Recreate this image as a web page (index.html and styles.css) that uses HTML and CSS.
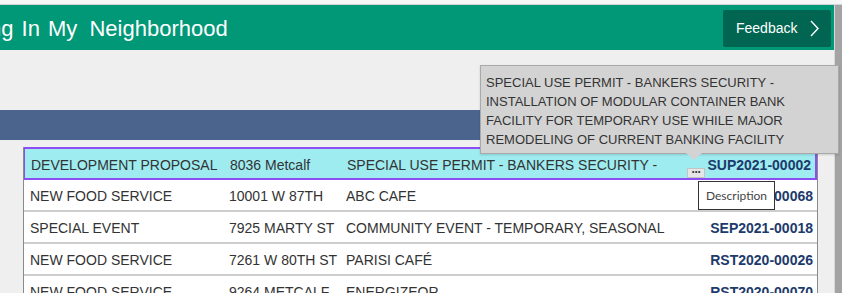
FILE: index.html
```html
<!DOCTYPE html>
<html>
<head>
<meta charset="utf-8">
<link rel="stylesheet" href="styles.css">
</head>
<body>
<div class="topstrip"></div>
<div class="frame">
  <div class="main">
    <header class="header">
      <h1 class="title">Happening In My <span class="title-last">Neighborhood</span></h1>
      <button class="feedback">Feedback
        <svg class="chev" width="9" height="17" viewBox="0 0 9 17"><path d="M1 1 L8 8.5 L1 16" fill="none" stroke="#fff" stroke-width="1.4"/></svg>
      </button>
    </header>
    <div class="spacer"></div>
    <div class="bluebar"></div>
    <div class="table">
      <div class="row selected">
        <span>DEVELOPMENT PROPOSAL</span><span>8036 Metcalf</span><span>SPECIAL USE PERMIT - BANKERS SECURITY -</span><span class="id">SUP2021-00002</span>
        <span class="more">&middot;&middot;&middot;</span>
      </div>
      <div class="row">
        <span>NEW FOOD SERVICE</span><span>10001 W 87TH</span><span>ABC CAFE</span><span class="id">RST2021-00068</span>
      </div>
      <div class="row">
        <span>SPECIAL EVENT</span><span>7925 MARTY ST</span><span>COMMUNITY EVENT - TEMPORARY, SEASONAL</span><span class="id">SEP2021-00018</span>
      </div>
      <div class="row">
        <span>NEW FOOD SERVICE</span><span>7261 W 80TH ST</span><span>PARISI CAFÉ</span><span class="id">RST2020-00026</span>
      </div>
      <div class="row">
        <span>NEW FOOD SERVICE</span><span>9264 METCALF</span><span>ENERGIZEOR</span><span class="id">RST2020-00070</span>
      </div>
    </div>
  </div>
  <div class="scrollbar"></div>
</div>
<div class="tip">SPECIAL USE PERMIT - BANKERS SECURITY -<br>INSTALLATION OF MODULAR CONTAINER BANK<br>FACILITY FOR TEMPORARY USE WHILE MAJOR<br>REMODELING OF CURRENT BANKING FACILITY</div>
<div class="tip-arrow"></div>
<div class="desc">Description</div>
</body>
</html>
```

FILE: styles.css
```css
html, body {
  margin: 0;
  padding: 0;
}
body {
  width: 842px;
  height: 293px;
  overflow: hidden;
  background: #efefef;
  font-family: "Liberation Sans", Arial, sans-serif;
  position: relative;
}
.topstrip {
  height: 4px;
  background: #f6f6f6;
  border-bottom: 1px solid #d4d4d4;
}
.frame {
  display: flex;
  height: 288px;
}
.main {
  flex: 1;
  overflow: hidden;
}
.scrollbar {
  width: 7px;
  background: #a3a3a3;
  border-left: 1px solid #d8d8d8;
}
.header {
  height: 45px;
  background: #009877;
  display: flex;
  align-items: center;
  justify-content: space-between;
  overflow: hidden;
}
.title {
  margin: 0 0 0 -93px;
  font-weight: normal;
  font-size: 22px;
  word-spacing: 2px;
  color: #fff;
  white-space: nowrap;
  line-height: 1;
  padding-top: 2px;
}
.title-last {
  margin-left: 4px;
}
.feedback {
  height: 37px;
  width: 108px;
  margin-right: 3px;
  margin-top: 1px;
  background: #006651;
  border: none;
  border-radius: 2px;
  color: #fff;
  font-family: "Liberation Sans", Arial, sans-serif;
  font-size: 14px;
  display: flex;
  align-items: center;
  padding: 0 0 0 13px;
}
.chev {
  margin-left: 13px;
}
.spacer {
  height: 60px;
}
.bluebar {
  height: 30px;
  background: #4a648d;
}
.table {
  margin: 7px 16px 0 23px;
  border-left: 1px solid #8a8a8a;
  border-right: 1px solid #8a8a8a;
  background: #fff;
}
.row {
  position: relative;
  display: grid;
  grid-template-columns: 199px 117px 1fr auto;
  align-items: center;
  height: 28px;
  padding: 2px 4px 0 6px;
  box-sizing: content-box;
  border-bottom: 2px solid #cdcdcd;
  font-size: 14px;
  color: #333;
  white-space: nowrap;
}
.row.selected {
  background: #9eecf0;
  border: 2px solid #8c4df2;
  border-left-width: 1px;
  height: 27px;
}
.id {
  font-weight: bold;
  color: #1c3a6b;
  text-align: right;
}
.more {
  position: absolute;
  left: 662px;
  top: 19px;
  width: 16px;
  height: 8px;
  background: #e6e6e6;
  border: 1px solid #c4c4c4;
  font-size: 12px;
  line-height: 6px;
  text-align: center;
  color: #333;
  font-weight: bold;
  letter-spacing: -1px;
}
.tip {
  position: absolute;
  left: 480px;
  top: 65px;
  width: 352px;
  height: 76px;
  padding: 7px 0 4px 5px;
  background: #d3d3d3;
  border: 1px solid #a9a9a9;
  font-size: 13px;
  line-height: 19px;
  color: #333;
  box-shadow: 0 1px 2px rgba(0,0,0,0.15);
}
.tip-arrow {
  position: absolute;
  left: 686px;
  top: 153px;
  width: 0;
  height: 0;
  border-left: 8px solid transparent;
  border-right: 8px solid transparent;
  border-top: 7px solid #d3d3d3;
}
.desc {
  position: absolute;
  left: 698px;
  top: 181px;
  width: 75px;
  height: 27px;
  background: #fff;
  border: 1px solid #333;
  font-family: Lato, "Open Sans", sans-serif;
  font-size: 12px;
  color: #444;
  line-height: 27px;
  text-align: center;
}
```
